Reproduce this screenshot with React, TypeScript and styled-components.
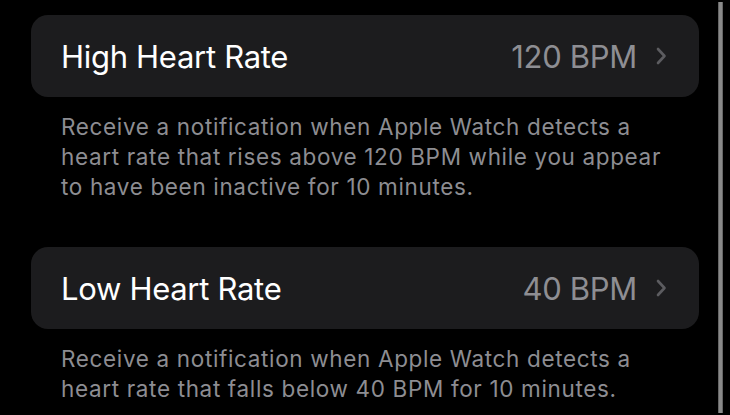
import styled, { createGlobalStyle } from 'styled-components'

const GlobalStyle = createGlobalStyle`
  html, body {
    margin: 0;
    padding: 0;
    background: #000;
  }
  body {
    font-family: Inter, 'Noto Sans', sans-serif;
    -webkit-font-smoothing: antialiased;
  }
`

type Alert = {
  title: string
  value: string
  note: string
}

const alerts: Alert[] = [
  {
    title: 'High Heart Rate',
    value: '120 BPM',
    note: 'Receive a notification when Apple Watch detects a heart rate that rises above 120 BPM while you appear to have been inactive for 10 minutes.',
  },
  {
    title: 'Low Heart Rate',
    value: '40 BPM',
    note: 'Receive a notification when Apple Watch detects a heart rate that falls below 40 BPM for 10 minutes.',
  },
]

const Chevron = () => (
  <svg width="12" height="18" viewBox="0 0 12 18" fill="none">
    <path
      d="M3 2 L9.5 9 L3 16"
      stroke="#5c5c60"
      strokeWidth="2.6"
      strokeLinecap="round"
      strokeLinejoin="round"
    />
  </svg>
)

export default function App() {
  return (
    <>
      <GlobalStyle />
      <Screen>
        <List>
          {alerts.map((a) => (
            <Section key={a.title}>
              <Row>
                <Title>{a.title}</Title>
                <Detail>
                  <Value>{a.value}</Value>
                  <Chevron />
                </Detail>
              </Row>
              <Footer>{a.note}</Footer>
            </Section>
          ))}
        </List>
        <Edge />
      </Screen>
    </>
  )
}

const Screen = styled.div`
  width: 730px;
  height: 415px;
  display: flex;
  overflow: hidden;
  background: #000;
`

const List = styled.div`
  width: 668px;
  padding: 15px 0 0 31px;
  display: flex;
  flex-direction: column;
  gap: 45px;
`

const Section = styled.div`
  display: flex;
  flex-direction: column;
`

const Row = styled.div`
  height: 82px;
  box-sizing: border-box;
  padding: 0 32px 0 30px;
  border-radius: 17px;
  background: #1c1c1e;
  display: flex;
  align-items: center;
  justify-content: space-between;
`

const Title = styled.span`
  color: #fff;
  font-size: 31px;
  letter-spacing: -0.3px;
`

const Detail = styled.div`
  display: flex;
  align-items: center;
  gap: 18px;
`

const Value = styled.span`
  color: #8e8e93;
  font-size: 31px;
  letter-spacing: -0.3px;
`

const Footer = styled.p`
  margin: 15px 0 0;
  padding: 0 20px 0 30px;
  color: #8d8d92;
  font-size: 22.5px;
  letter-spacing: 0.65px;
  line-height: 30px;
`

const Edge = styled.div`
  width: 5px;
  margin: 2px 0 2px 19px;
  background: linear-gradient(90deg, #555 0%, #8a8a8a 30%, #8a8a8a 70%, #555 100%);
`
